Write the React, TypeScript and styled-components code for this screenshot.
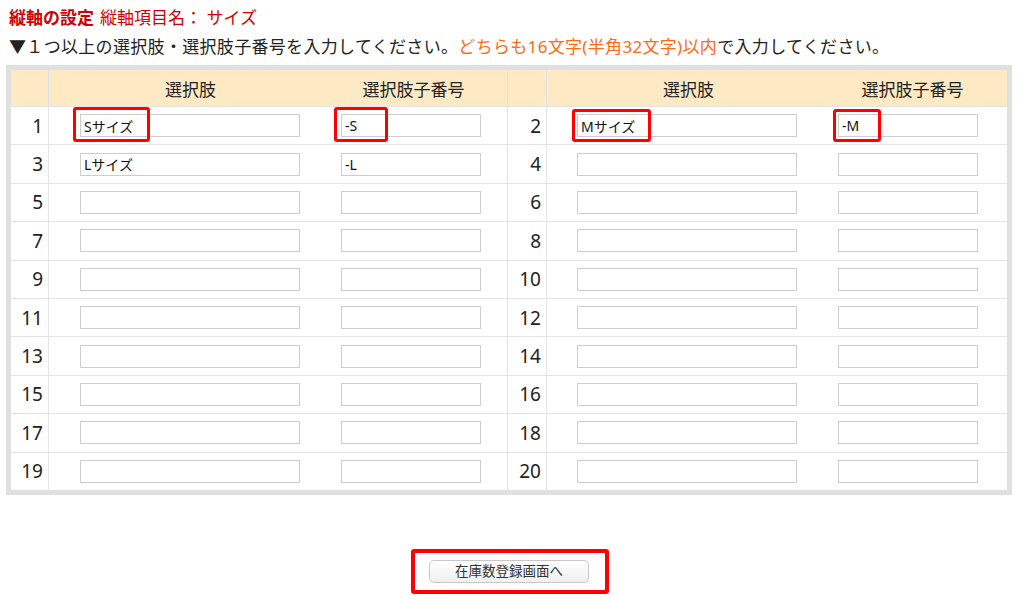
import React from 'react';
import styled, { createGlobalStyle } from 'styled-components';

const FONT = '"Noto Sans", "Noto Sans CJK JP", sans-serif';

const GlobalStyle = createGlobalStyle`
  html, body { margin: 0; padding: 0; background: #fff; }
  body { font-family: ${FONT}; color: #222; }
`;

const Page = styled.div`
  width: 1006px;
  padding: 0 6px;
`;

const Title = styled.div`
  margin-top: 6px;
  padding-left: 3px;
  line-height: 24px;
  font-size: 17px;
  color: #d20000;
  white-space: nowrap;
`;

const TitleStrong = styled.span`
  font-weight: 700;
  margin-right: 6px;
`;

const Notice = styled.div`
  margin: 5px 0 6px;
  padding-left: 3px;
  line-height: 24px;
  font-size: 17px;
  letter-spacing: 0.32px;
  color: #222;
  white-space: nowrap;
`;

const Accent = styled.span`
  color: #ff6a13;
`;

const Frame = styled.div`
  background: #e0e0e0;
  padding: 5px;
`;

const Sheet = styled.div`
  background: #fff;
`;

const Row = styled.div<{ $header?: boolean }>`
  display: grid;
  grid-template-columns: 38px 283px 176px 39px 283px 177px;
  box-sizing: border-box;
  height: ${(p) => (p.$header ? '36px' : '38.4px')};
  background: ${(p) => (p.$header ? '#fde9c3' : '#fff')};
  & + & {
    border-top: 1px solid #e3e3e3;
  }
`;

const NumCell = styled.div`
  display: flex;
  align-items: center;
  justify-content: flex-end;
  padding-right: 5px;
  border-right: 1px solid #e3e3e3;
  font-size: 19px;
  color: #222;
`;

const HeadCell = styled.div<{ $padRight?: number; $divider?: boolean }>`
  display: flex;
  align-items: center;
  justify-content: center;
  padding-right: ${(p) => p.$padRight ?? 0}px;
  font-size: 17px;
  color: #222;
  border-right: ${(p) => (p.$divider ? '1px solid #e3e3e3' : 'none')};
`;

const FieldCell = styled.div<{ $padLeft: number; $divider?: boolean }>`
  display: flex;
  align-items: center;
  padding-left: ${(p) => p.$padLeft}px;
  border-right: ${(p) => (p.$divider ? '1px solid #e3e3e3' : 'none')};
`;

const FieldWrap = styled.span`
  position: relative;
  display: inline-flex;
`;

const TextBox = styled.input<{ $w: number }>`
  width: ${(p) => p.$w}px;
  height: 23px;
  box-sizing: border-box;
  border: 1px solid #cdcdcd;
  border-radius: 0;
  padding: 0 3px;
  margin: 0;
  font-family: ${FONT};
  font-size: 14px;
  color: #111;
  background: #fff;
  outline: none;
`;

const Highlight = styled.span<{ $l: number; $t: number; $w: number; $h: number }>`
  position: absolute;
  left: ${(p) => p.$l}px;
  top: ${(p) => p.$t}px;
  width: ${(p) => p.$w}px;
  height: ${(p) => p.$h}px;
  box-sizing: border-box;
  border: 3px solid #ff0000;
  border-radius: 3px;
  pointer-events: none;
`;

const Footer = styled.div`
  display: flex;
  justify-content: center;
  margin-top: 54px;
  padding-left: 2px;
`;

const ButtonFrame = styled.div`
  border: 4px solid #ff0000;
  border-radius: 3px;
  padding: 7px 16px 7px 14px;
`;

const SubmitButton = styled.button`
  display: block;
  width: 160px;
  height: 23px;
  box-sizing: border-box;
  border: 1px solid #c8c8c8;
  border-radius: 5px;
  background: linear-gradient(#ffffff, #f0f0f0);
  font-family: ${FONT};
  font-size: 13.5px;
  color: #333;
  padding: 0;
  line-height: 21px;
`;

type Box = { l: number; t: number; w: number; h: number };
type Entry = { choice: string; code: string; choiceBox?: Box; codeBox?: Box };

const data: Record<number, Entry> = {
  1: {
    choice: 'Sサイズ',
    code: '-S',
    choiceBox: { l: -7, t: -7, w: 77, h: 35 },
    codeBox: { l: -7, t: -7, w: 54, h: 35 },
  },
  2: {
    choice: 'Mサイズ',
    code: '-M',
    choiceBox: { l: -5, t: -5, w: 79, h: 33 },
    codeBox: { l: -5, t: -5, w: 48, h: 33 },
  },
  3: { choice: 'Lサイズ', code: '-L' },
};

function Field({ w, value, box }: { w: number; value: string; box?: Box }) {
  return (
    <FieldWrap>
      <TextBox $w={w} defaultValue={value} />
      {box && <Highlight $l={box.l} $t={box.t} $w={box.w} $h={box.h} />}
    </FieldWrap>
  );
}

function Half({ n, first }: { n: number; first: boolean }) {
  const e = data[n];
  return (
    <>
      <NumCell>{n}</NumCell>
      <FieldCell $padLeft={first ? 31 : 30}>
        <Field w={220} value={e?.choice ?? ''} box={e?.choiceBox} />
      </FieldCell>
      <FieldCell $padLeft={first ? 9 : 8} $divider={first}>
        <Field w={140} value={e?.code ?? ''} box={e?.codeBox} />
      </FieldCell>
    </>
  );
}

export default function App() {
  const rows = Array.from({ length: 10 }, (_, i) => i);
  return (
    <>
      <GlobalStyle />
      <Page>
        <Title>
          <TitleStrong>縦軸の設定</TitleStrong>縦軸項目名： サイズ
        </Title>
        <Notice>
          ▼１つ以上の選択肢・選択肢子番号を入力してください。
          <Accent>どちらも16文字(半角32文字)以内</Accent>で入力してください。
        </Notice>
        <Frame>
          <Sheet>
            <Row $header>
              <NumCell />
              <HeadCell>選択肢</HeadCell>
              <HeadCell $padRight={12} $divider>
                選択肢子番号
              </HeadCell>
              <NumCell />
              <HeadCell>選択肢</HeadCell>
              <HeadCell $padRight={12}>選択肢子番号</HeadCell>
            </Row>
            {rows.map((i) => (
              <Row key={i}>
                <Half n={i * 2 + 1} first />
                <Half n={i * 2 + 2} first={false} />
              </Row>
            ))}
          </Sheet>
        </Frame>
        <Footer>
          <ButtonFrame>
            <SubmitButton type="button">在庫数登録画面へ</SubmitButton>
          </ButtonFrame>
        </Footer>
      </Page>
    </>
  );
}
